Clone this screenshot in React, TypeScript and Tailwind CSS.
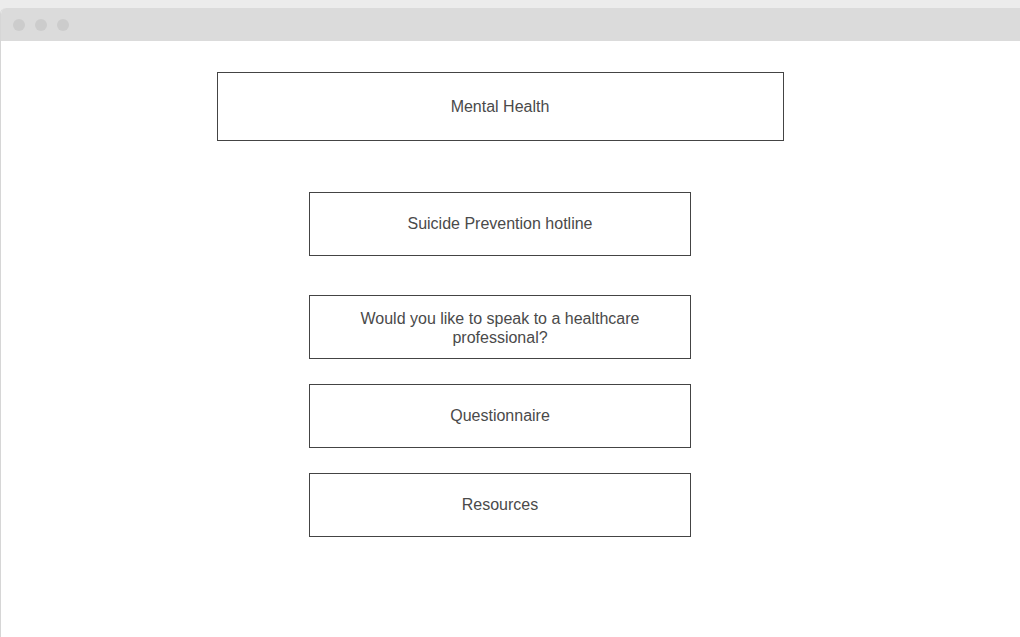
import React from "react";

const Box = ({ children, className = "" }: { children: React.ReactNode; className?: string }) => (
  <div
    className={`flex items-center justify-center border border-[#444444] text-center text-[16px] leading-[19px] text-[#4a4a4a] ${className}`}
  >
    {children}
  </div>
);

export default function App() {
  return (
    <div
      className="h-[637px] w-[1020px] overflow-hidden bg-[#ececec] pt-[8px]"
      style={{ fontFamily: '"Liberation Sans", Arial, sans-serif' }}
    >
      <div className="flex h-full w-[1030px] flex-col overflow-hidden rounded-tl-[6px] border-l border-[#d6d6d6] bg-white">
        <div className="flex h-[33px] shrink-0 items-center gap-[10px] bg-[#dbdbdb] pl-[12px]">
          <span className="h-[12px] w-[12px] rounded-full bg-[#cccccc]" />
          <span className="h-[12px] w-[12px] rounded-full bg-[#cccccc]" />
          <span className="h-[12px] w-[12px] rounded-full bg-[#cccccc]" />
        </div>
        <div className="flex w-[998px] flex-col items-center pt-[31px]">
          <Box className="h-[69px] w-[567px]">Mental Health</Box>
          <Box className="mt-[51px] h-[64px] w-[382px] pb-[2px]">Suicide Prevention hotline</Box>
          <Box className="mt-[39px] h-[64px] w-[382px] px-[20px] pt-[2px]">
            Would you like to speak to a healthcare professional?
          </Box>
          <Box className="mt-[25px] h-[64px] w-[382px] pb-[2px]">Questionnaire</Box>
          <Box className="mt-[25px] h-[64px] w-[382px] pb-[2px]">Resources</Box>
        </div>
      </div>
    </div>
  );
}
